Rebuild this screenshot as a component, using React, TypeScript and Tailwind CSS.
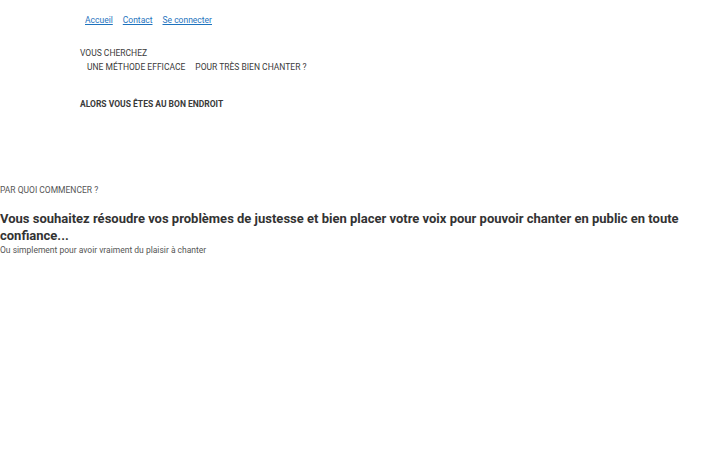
export default function App() {
  return (
    <div className="min-h-[450px] w-[720px] bg-white text-[#3a3a3a]" style={{ fontFamily: "Roboto, 'Noto Sans', sans-serif" }}>
      <div className="pl-[80px]">
        <nav className="flex gap-[10px] pl-[5px] pt-[13px] text-[8.5px] leading-[14px]">
          <a className="text-[#1e73be] underline">Accueil</a>
          <a className="text-[#1e73be] underline">Contact</a>
          <a className="text-[#1e73be] underline">Se connecter</a>
        </nav>
        <div className="mt-[19px] text-[8.5px] leading-[14px]">VOUS CHERCHEZ</div>
        <div className="flex gap-[10px] pl-[7px] text-[8.5px] leading-[14px]">
          <span>UNE MÉTHODE EFFICACE</span>
          <span>POUR TRÈS BIEN CHANTER ?</span>
        </div>
        <div className="mt-[23px] text-[8.5px] font-bold leading-[14px]">ALORS VOUS ÊTES AU BON ENDROIT</div>
      </div>
      <div className="mt-[73px] text-[8.5px] leading-[12px] text-[#555]">PAR QUOI COMMENCER ?</div>
      <h1 className="mt-[14px] text-[13px] font-bold leading-[17px] text-[#333]">
        Vous souhaitez résoudre vos problèmes de justesse et bien placer votre voix pour pouvoir chanter en public en toute confiance...
      </h1>
      <p className="text-[8.5px] leading-[12px] text-[#555]">Ou simplement pour avoir vraiment du plaisir à chanter</p>
    </div>
  );
}
